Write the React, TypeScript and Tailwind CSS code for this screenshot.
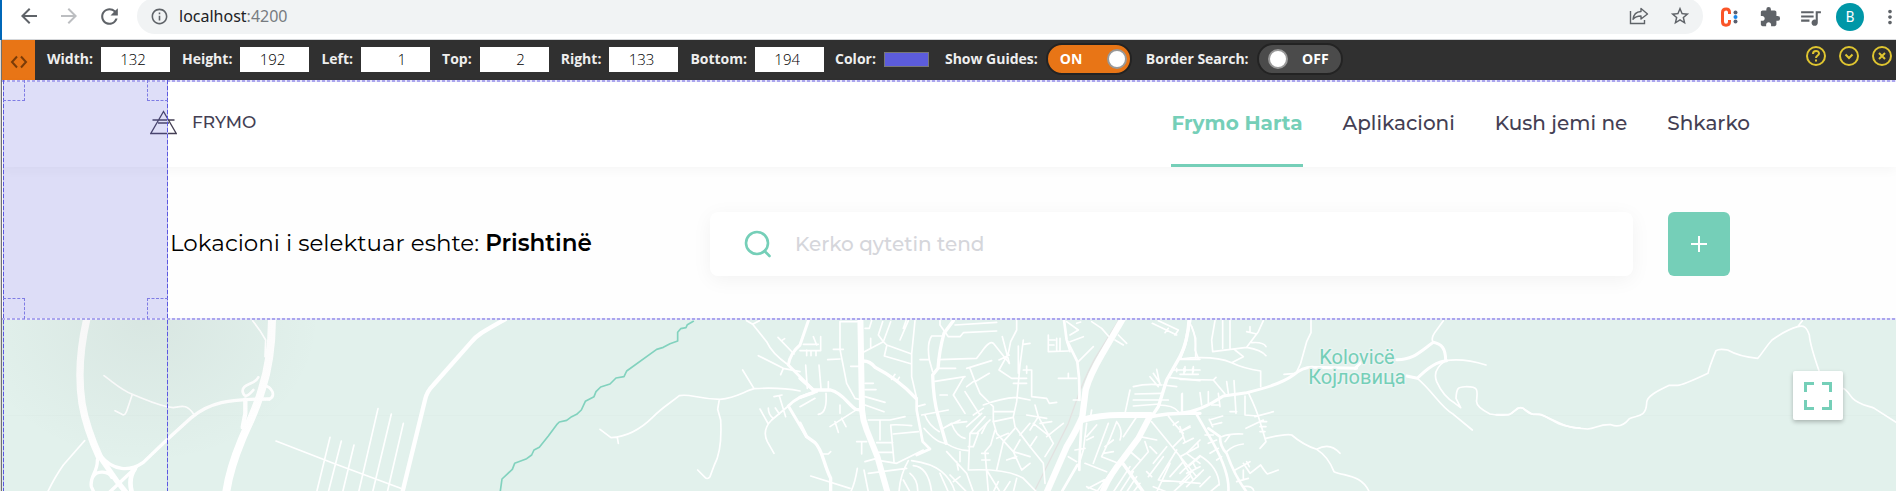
import type { ReactNode } from "react";
import {
  MdArrowBack,
  MdArrowForward,
  MdExtension,
  MdInfoOutline,
  MdMoreVert,
  MdQueueMusic,
  MdRefresh,
  MdStarOutline,
} from "react-icons/md";

function BrowserBar() {
  return (
    <div className="flex h-10 items-start overflow-hidden border-b border-[#d5d7da] bg-white pl-[15px] text-[#5f6368]">
      <div className="flex h-8 items-center gap-4">
        <button aria-label="Back"><MdArrowBack size={24} /></button>
        <button aria-label="Forward" className="text-[#bcbec1]"><MdArrowForward size={24} /></button>
        <button aria-label="Reload"><MdRefresh size={25} /></button>
      </div>
      <div className="ml-[15px] flex h-[34px] min-w-0 flex-1 items-end">
        <div className="flex h-9 w-full items-center rounded-full bg-[#f1f3f4] pr-3 pl-[13px]">
          <MdInfoOutline size={19} />
          <span className="ml-[10px] font-['Noto_Sans',sans-serif] text-base text-[#202124]">
            localhost<span className="text-[#777b80]">:4200</span>
          </span>
          <button aria-label="Share" className="ml-auto">
            <svg width="20" height="20" viewBox="0 0 20 20" fill="none" stroke="currentColor" strokeWidth="1.4">
              <path d="M1.5 5v12.5h14V14" />
              <path d="M12 2.5 18.5 8 12 13v-3c-3.500 0-6 .8-8 3.300C4.500 9 7.500 5.800 12 5.500z" strokeLinejoin="round" />
            </svg>
          </button>
          <button aria-label="Bookmark" className="ml-5"><MdStarOutline size={22} /></button>
        </div>
      </div>
      <div className="flex h-[34px] items-center pl-4">
        <button aria-label="Clockify">
          <svg width="20" height="20" viewBox="0 0 20 20">
            <path d="M10.500 7V5.200C10.500 3 9 2 7.200 2S3.500 3 3.500 5.500v9C3.500 17 5 18.200 7 18.200s3.500-1.200 3.500-3.400V13" fill="none" stroke="#fa5528" strokeWidth="3" />
            <circle cx="16.500" cy="5.500" r="2" fill="#5a6070" />
            <circle cx="16.500" cy="10" r="2" fill="#1a86e8" />
            <circle cx="16.500" cy="14.500" r="2" fill="#5a6070" />
          </svg>
        </button>
        <button aria-label="Extensions" className="ml-5"><MdExtension size={22} /></button>
        <button aria-label="Media" className="ml-[17px]"><MdQueueMusic size={25} /></button>
        <button aria-label="Profile" className="ml-[13px] h-7 w-7 rounded-full bg-[#0097a7] font-[Roboto,sans-serif] text-sm text-white">B</button>
        <button aria-label="Menu" className="-mr-[5px] ml-[15px]"><MdMoreVert size={22} /></button>
      </div>
    </div>
  );
}

function NumberField({ label, value }: { label: string; value: string }) {
  return (
    <label className="flex items-center gap-2">
      {label}
      <input
        type="text"
        defaultValue={value}
        className="h-[25px] w-[69px] bg-white pr-6 text-right text-[15px] font-light text-black outline-none"
      />
    </label>
  );
}

function Toggle({ label, on }: { label: string; on: boolean }) {
  return (
    <div className="flex items-center gap-2">
      <span>{label}</span>
      <button
        role="switch"
        aria-checked={on}
        aria-label={label}
        className={
          on
            ? "flex h-8 w-[86px] items-center justify-between rounded-full border-2 border-[#232323] bg-[#e87516] pr-[3px] pl-3 text-white"
            : "flex h-8 w-[86px] flex-row-reverse items-center justify-between rounded-full border-2 border-[#232323] bg-[#4b4b4b] pr-3 pl-[9px] text-white"
        }
      >
        <span>{on ? "ON" : "OFF"}</span>
        <span className="h-5 w-5 rounded-full border-2 border-[#999] bg-white" />
      </button>
    </div>
  );
}

function ToolIcon({ label, children }: { label: string; children: ReactNode }) {
  return (
    <button aria-label={label}>
      <svg width="22" height="22" viewBox="0 0 22 22" fill="none" stroke="#dfc530" strokeWidth="2">
        <circle cx="11" cy="11" r="9" />
        {children}
      </svg>
    </button>
  );
}

function RulerBar() {
  return (
    <div className="flex h-10 items-center bg-[#303030] pr-[3px] font-['Open_Sans',sans-serif] text-sm font-bold whitespace-nowrap text-[#eee]">
      <button aria-label="Drag" className="flex h-10 w-[33px] items-center justify-center bg-[#e87516] pt-1">
        <svg width="18" height="14" viewBox="0 0 18 14" fill="none" stroke="#7a3b08" strokeWidth="2">
          <path d="M7 1.500 2 7l5 5.500M11 1.500 16 7l-5 5.500" />
        </svg>
      </button>
      <div className="ml-3 flex items-center gap-4 pb-[2px]">
        <div className="flex items-center gap-3">
          <NumberField label="Width:" value="132" />
          <NumberField label="Height:" value="192" />
          <NumberField label="Left:" value="1" />
          <NumberField label="Top:" value="2" />
          <NumberField label="Right:" value="133" />
          <NumberField label="Bottom:" value="194" />
          <div className="-ml-px flex items-center gap-2">
            <span>Color:</span>
            <button aria-label="Color" className="h-[15px] w-[45px] border border-[#777] bg-[#5c5cdc]" />
          </div>
        </div>
        <div className="flex items-center gap-[14px]">
          <Toggle label="Show Guides:" on />
          <Toggle label="Border Search:" on={false} />
        </div>
      </div>
      <div className="ml-auto flex gap-[11px] pb-2">
        <ToolIcon label="Help">
          <path d="M8 9c0-4 6-4 6-.5 0 2-3 2-3 4.500M11 14.500v2" />
        </ToolIcon>
        <ToolIcon label="Collapse"><path d="m7.500 9.500 3.500 3.500 3.500-3.500" /></ToolIcon>
        <ToolIcon label="Close"><path d="m8 8 6 6M14 8l-6 6" /></ToolIcon>
      </div>
    </div>
  );
}

const links = ["Aplikacioni", "Kush jemi ne", "Shkarko"];

function SiteHeader() {
  return (
    <header className="relative flex h-[87px] items-center bg-white pr-[146px] pl-[148px] font-medium text-[#443f54] shadow-[0_4px_10px_rgba(0,0,0,0.03)]">
      <a href="#home" className="flex items-center gap-[15px] pb-[2px] text-[17px]">
        <svg width="27" height="25" viewBox="0 0 27 25" fill="none" stroke="currentColor" strokeWidth="1.300">
          <path d="M13.500 1.500.8 23.500h25.400zM2.500 10h22M8 13h11" />
        </svg>
        FRYMO
      </a>
      <nav className="ml-auto flex h-full items-center gap-10 text-xl">
        <a href="#harta" className="flex h-full items-center border-b-3 border-[#75cfb8] pt-px font-bold text-[#75cfb8]">
          Frymo Harta
        </a>
        {links.map((l) => (
          <a key={l} href={"#" + l} className="pb-[2px]">{l}</a>
        ))}
      </nav>
    </header>
  );
}

function SearchRow() {
  return (
    <section className="flex h-[153px] items-center bg-[#fefefe] pr-[166px] pl-[168px]">
      <p className="w-[540px] shrink-0 text-[23px] text-black">
        Lokacioni i selektuar eshte: <b className="font-semibold">Prishtinë</b>
      </p>
      <label className="flex h-16 min-w-0 flex-1 items-center gap-[23px] rounded-lg bg-white pl-[34px] shadow-[0_4px_20px_rgba(0,0,0,0.05)]">
        <svg width="28" height="28" viewBox="0 0 28 28" fill="none" stroke="#75cfb8" strokeWidth="2.600" strokeLinecap="round">
          <circle cx="13" cy="13" r="11" />
          <path d="m20.500 21 5 5" />
        </svg>
        <input
          aria-label="Kerko qytetin tend"
          placeholder="Kerko qytetin tend"
          className="min-w-0 flex-1 text-xl font-medium outline-none placeholder:text-[#d5d6db]"
        />
      </label>
      <button aria-label="Shto" className="ml-[35px] flex h-16 w-[62px] items-center justify-center rounded-md bg-[#75cfb8]">
        <svg width="18" height="18" viewBox="0 0 18 18" stroke="#fff" strokeWidth="2">
          <path d="M9 1v16M1 9h16" />
        </svg>
      </button>
    </section>
  );
}

function CityMap() {
  return (
    <section className="relative min-h-[171px] flex-1 overflow-hidden bg-[#e2f1ec]">
      <svg className="absolute inset-0 h-full w-full" viewBox="2 320 1894 171" preserveAspectRatio="xMinYMin slice" fill="none" stroke="#fff" strokeLinecap="round" strokeLinejoin="round">
        <path d="M2 415.500H1896" stroke="#dfeee9" strokeWidth="1" />

        <g transform="translate(0 290) scale(.33333)">
          <g strokeWidth="5">
            <path d="M312 257C350 285 365 300 397 313C440 330 480 350 520 353C545 349 560 340 583 375M397 313L383 355Q376 380 366 373L345 362M254 452L190 525Q165 560 143 606" />
            <path d="M758 92L780 122L797 150L795 200M828 453L1000 520L1202 595M990 442L950 606M1024 453L985 606M1062 465L1028 606M1134 356L1076 606M1174 372L1118 606M1210 400L1162 606" />
          </g>
          <path strokeWidth="22" strokeLinecap="butt" d="M262 80C238 180 234 260 246 340C256 400 275 450 300 505" />
          <path strokeWidth="16" d="M296 495L352 575L380 610" />
          <path strokeWidth="10" d="M300 495C340 545 390 545 430 517L500 450L575 382C630 338 680 327 808 327M292 510C294 545 268 560 274 590L284 612M278 562C290 538 328 545 335 562M410 530L325 610" />
          <path strokeWidth="14" d="M404 537C388 560 390 590 397 612" />
          <path strokeWidth="24" strokeLinecap="butt" d="M816 80C816 160 808 230 785 300C765 370 745 400 725 450C700 510 685 560 678 612" />
          <path strokeWidth="13" d="M736 328V370L728 412" />
          <path strokeWidth="8" d="M775 262C765 285 725 280 728 305C732 322 742 322 760 300M790 286C818 290 828 318 808 328" />
        </g>

        <g transform="translate(400 290) scale(.33333)">
          <path strokeWidth="13" d="M315 88C250 125 230 135 215 155L100 285Q80 305 75 330L6 612" />
          <path strokeWidth="5" d="M600 418L633 443Q700 440 760 380C790 350 810 340 838 317C870 310 890 327 960 328C1010 323 1030 305 1062 296C1110 293 1150 293 1200 303M1028 240L1062 296M652 443L655 460M958 328L953 358L962 390Q967 480 943 525L930 560Q922 570 915 562L893 540M1040 92L1058 103L1100 155Q1115 190 1165 225M1058 103L1078 92M1134 142L1182 192M1145 152L1154 146M1075 197L1150 235L1200 245M1150 235L1142 254M1122 320L1146 315M1138 318L1157 380M1165 348L1115 390Q1085 420 1102 455L1122 490M1080 357L1105 402M1105 354Q1105 375 1120 385M1126 354L1138 372" />
          <path strokeWidth="9" d="M1225 92L1200 165Q1170 190 1165 225L1240 300M1165 348Q1190 320 1250 305M1165 348L1220 440" />
          <path stroke="#82d2be" strokeWidth="5" d="M880 94L862 104L858 113L842 116L833 127V153L810 161L790 172L770 178L680 243L672 260L648 264L630 282L602 291L588 305L582 320L556 334L544 360L530 373L515 380L500 391L478 396L470 404L445 438L418 472L402 480L395 495L380 506L344 520L337 538L306 567L300 610" />
        </g>

        <g transform="translate(800 290) scale(.33333)">
          <path stroke="#e3e2e1" strokeWidth="4" d="M958 88L885 205Q850 270 830 330L805 400Q750 510 702 606" />
          <path strokeWidth="18" strokeLinecap="butt" d="M181 80L186 360Q188 390 200 420L232 500L264 612" />
          <path strokeWidth="19" strokeLinecap="butt" d="M972 80L905 195Q870 255 857 300L847 380Q830 420 800 470L738 612" />
          <path strokeWidth="18" d="M845 390Q900 375 960 375L1052 375L1015 445L970 505Q925 560 905 612" />
          <path strokeWidth="10" d="M0 265L40 300H92C130 310 145 345 168 358L186 360M188 213Q210 212 225 232C270 255 315 290 348 325M0 400L20 440L45 458C68 480 70 520 92 565V606M0 322L40 308M460 92L432 130Q418 180 414 235L398 255Q400 330 415 380L438 460M1167 88Q1165 150 1140 200L1100 270L1075 350L1055 380Q1100 368 1200 370M965 515L1030 606" />
          <path strokeWidth="8" d="M350 325V360L368 455L390 477L350 495M792 90L800 150L832 215Q840 270 838 330M845 395Q838 500 838 540M832 525L785 606" />
          <g strokeWidth="5">
            <path d="M120 95H172M120 95V178L140 280L165 325L186 330M100 178H130M83 209L120 207M152 229H180M0 182H60M10 163H55M62 140V182M40 140L50 165M20 180V197M33 182V197M48 182V197M17 225L22 295M57 225L63 295M85 275V300M78 310Q82 370 55 373M0 350L45 325M165 362L90 410M120 370V345M105 395L115 427M125 385L138 410M92 485L85 492H70M32 558L150 595M172 535Q165 580 152 606M192 540L205 606" />
            <path d="M195 115H208L215 92M248 95L235 135L250 155L190 187M212 145V175M272 95L250 155M325 92L300 150M318 92L310 115M250 155L260 165L335 192L345 92M260 168L253 198L335 222M335 192V260L350 325M275 268L285 253M290 275L298 262M195 280H220M195 299H228M195 320L255 337M195 345L252 365M205 390H270L315 380M240 393V450M272 405Q290 403 335 407M272 405L282 515M280 432L355 425M230 458H278M235 487H280M170 455H200M185 455V492M195 515L230 505M205 550L320 535M240 512L290 520L370 480M325 512Q300 555 297 606M335 512Q395 520 425 545T465 606M340 527Q385 530 395 606M330 550Q355 570 353 606M420 550L445 606M310 570L330 606" />
            <path d="M420 92V105L445 140H480L490 128L590 123M465 105L590 97M430 138H395Q380 160 388 210L398 245M360 209H388M415 209L530 205L545 185Q570 150 580 160L628 220M414 235H467M405 274L495 260M420 315H442M365 375L445 360M350 350L375 343M375 375Q385 405 418 425M372 415Q410 460 438 460M438 410L480 390M438 460Q470 480 505 482M455 402Q470 440 495 445M430 415L455 400L500 395" />
            <path d="M650 92V120L632 155L625 190L597 240L635 265H680M607 140L615 170L628 220M670 150L660 225L650 335L640 380M670 163L690 160M655 168V250M597 210L628 195M670 240H695M680 228V250M695 240V320L740 325L748 340L770 337M640 280H680M500 235L575 212M510 235L525 275L540 310L580 350V395M525 275L568 250M492 260L460 315L495 370M500 290L520 275M495 305L540 375M550 345Q600 325 650 322L690 330M580 365H640M580 395L640 382L645 410L690 470L730 520L735 580M520 375L550 355M500 410L545 370M510 430L555 380M530 430L570 390M510 430L505 540Q620 535 670 565L710 606M510 430H535M535 430L520 470H505" />
            <path d="M580 395L590 430L640 485L665 540M585 420L572 465L555 485L565 606M545 490H565M545 510H570M610 455L645 415M610 455L590 540M640 485L660 450M620 510L650 500M625 430L590 445M660 435L690 400M640 485L690 500M665 540L690 520M690 470L710 440M705 345L715 380L690 420M680 375L740 385M715 380L760 460M720 400L755 395M740 440L790 400M760 460L735 500M700 400L750 440M560 540L600 606M440 485L500 550L520 606M470 515L475 540M450 555L500 606M460 575L480 560M480 485V515M560 400L545 430M595 575L580 606M630 575L610 606M650 565L640 606" />
            <path d="M800 95L835 120L810 135M810 155L850 140M830 100L842 96M745 135V185L805 183M745 150H765M745 165H762M770 145V180M780 145V180M800 155L810 185M835 215L880 170M775 265H830M805 250V265M820 330H840M875 95L905 115L925 138M955 135L980 160M945 150L970 165M1057 100L1130 135M1075 92L1135 120L1125 135M1105 115L1095 128M1167 95Q1190 130 1185 180L1195 205M1140 208H1200M1115 240H1200M1105 262L1200 272M1130 235V245M1155 230V245M1180 230V245M1050 260L1075 290M1060 250L1080 280M1070 238L1080 285M1000 290Q1040 280 1085 285M1090 285L1130 290M1005 312L1085 310M1000 330H1105M1000 348L1080 342M990 300L975 370M1147 310V365M1075 345Q1120 345 1135 365M875 360L870 390M860 400L850 480L838 520M890 405L860 440M860 450L880 440M855 475L825 480M950 395Q930 450 905 500M925 400L880 520M950 395Q970 420 960 450M1010 380L970 440M905 500L955 520M855 520L920 545M940 450L915 470M940 485L910 490M830 515L805 500" />
            <path d="M1055 395L1190 560L1200 550M1105 378Q1120 400 1150 430M1120 405L1135 395M1140 425L1170 408M1150 440L1120 470M1070 490L1050 470M1035 455L1045 485L990 550M1020 440L1070 450M1160 490L1200 450M1130 480L1075 570M1150 515L1110 560M1175 545L1140 580M1200 500L1165 530M1090 500L1045 560M1110 520L1070 606M1170 560L1120 606M1075 570L1200 580M990 530L940 606M1000 545L960 606M1010 560L980 606M1020 580L1000 606M945 530L890 606M930 560L865 595M1100 470L1060 520M985 480L1020 510M860 590L900 606M1040 545L1055 560M1060 590L1100 606" />
          </g>
        </g>

        <g transform="translate(1180 290) scale(.33333)">
          <path strokeWidth="9" d="M30 92L15 165L0 205M0 370Q60 365 130 318L200 308Q300 285 340 255Q370 230 400 232L530 235M650 209C700 210 720 185 760 157C785 162 797 175 797 212M680 258L712 265Q760 215 800 212M525 235L545 215" />
          <path strokeWidth="5" d="M393 92V128L380 155L362 220L348 250L312 253M790 92L770 120Q750 145 760 157M797 212C840 205 880 213 918 225M797 212C770 230 760 250 770 275Q790 320 825 340L842 353M712 265C760 305 780 350 820 373L877 420M842 353L828 325C830 290 835 292 860 290C895 290 893 300 890 330Q885 350 930 372Q980 380 995 370L1012 355Q1025 350 1037 360L1055 372L1085 374L1140 400Q1170 415 1200 414" />
          <path strokeWidth="5" d="M205 308Q230 360 240 395L258 455L240 475M225 380L280 365M198 415L250 390M240 395H260M240 410H258M240 425H255M258 445Q320 430 335 435Q370 465 410 478Q445 500 462 545C500 560 545 555 568 606M410 478Q450 455 480 490" />
          <path strokeWidth="5" d="M105 92L95 150L98 185L200 172L235 125L250 92M128 92V175M150 92V175M200 125L230 132M210 110V125M200 172Q245 180 258 197M215 158Q250 155 258 170M165 180L190 200L155 218Q190 235 242 243V290M0 207Q100 195 155 218M35 110L47 145V205M0 253L55 253M12 235V253M38 235V253M0 268L100 270L135 312M100 270L108 262M5 312V362M60 308L65 345M85 305V340M115 310L120 350M95 345H115M140 275L145 310M162 272L168 370M150 365H170M195 318V375L232 378" />
          <path strokeWidth="8" d="M45 365L100 460Q150 550 145 606M85 415L120 440Q120 470 140 490Q165 560 200 606" />
          <path strokeWidth="5" d="M88 390L128 378M95 405L125 398M88 388L98 410M75 435H100M85 460L110 450M90 490L115 475M125 440Q150 430 188 432M140 485Q160 465 190 462M135 455L150 435M110 510L125 500M165 540L210 515M190 520L210 550L242 525Q255 545 262 552L295 540M200 515L208 530M170 575L205 565M190 540V570M190 590Q220 585 222 606M0 410L15 455M0 425L30 412M10 460L40 445M0 500L55 470L53 458M20 490L60 520M60 497Q20 530 0 550M60 497Q115 530 118 585M0 500L40 570M20 550L60 530M20 590L70 540M60 590L90 560M90 606L115 585M40 520L48 535" />
        </g>

        <g transform="translate(1496 290) scale(.33333)">
          <path strokeWidth="5" d="M252 414Q230 414 195 403M0 374H40Q55 363 68 354Q80 350 88 361Q100 372 112 373H130Q140 374 190 402Q220 413 275 417C300 415 310 402 345 404C365 412 385 405 400 386C420 375 450 385 452 340C450 320 480 305 520 286H545Q560 286 636 250Q640 230 660 182Q670 175 695 180Q730 200 785 205C800 190 805 175 828 150Q870 120 905 110L919 92M905 110C925 105 932 112 940 135Q942 165 970 245M1040 295C1055 300 1060 315 1070 325C1090 345 1120 348 1135 355L1202 398" />
        </g>

        <text fill="#75cfb8" stroke="#e9f4f1" strokeWidth="3" paintOrder="stroke" textAnchor="middle" fontFamily="Roboto, sans-serif" fontSize="20">
          <tspan x="1357" y="364">Kolovicë</tspan>
          <tspan x="1357" y="384">Којловица</tspan>
        </text>
      </svg>
      <div className="absolute top-0 left-0 h-36 w-80 bg-[radial-gradient(ellipse_at_45%_0%,rgba(90,90,90,0.07),transparent_70%)]" />
      <button aria-label="Fullscreen" className="absolute top-[51px] right-[53px] flex h-[49px] w-[50px] items-center justify-center rounded-xs bg-white shadow-[0_2px_4px_rgba(0,0,0,0.25)]">
        <svg width="28" height="28" viewBox="0 0 28 28" fill="none" stroke="#75cfb8" strokeWidth="3">
          <path d="M10 1.500H1.500V10M18 1.500h8.500V10M1.500 18v8.500H10M26.500 18v8.500H18" />
        </svg>
      </button>
    </section>
  );
}

const dashH = "bg-[repeating-linear-gradient(90deg,#aaa5ee_0_3px,#e9e8fb_3px_5px)]";
const dashV = "bg-[repeating-linear-gradient(180deg,#5b58e0_0_4px,#b9b7f0_4px_6px)]";

function SelectionOverlay() {
  return (
    <div className="pointer-events-none absolute inset-0">
      <div className="absolute top-0 left-px h-60 w-[165px] bg-[#5c5cdc]/20" />
      <div className={"absolute top-0 left-0 h-[2px] w-full " + dashH} />
      <div className={"absolute top-[238px] left-0 h-[2px] w-full " + dashH} />
      <div className={"absolute top-0 left-[1px] h-full w-px " + dashV} />
      <div className={"absolute top-0 left-[165px] h-full w-px " + dashV} />
      <div className="absolute top-0 left-px h-[21px] w-[22px] border-r border-b border-dashed border-[#7f7ce4]" />
      <div className="absolute top-0 left-[145px] h-[21px] w-[21px] border-b border-l border-dashed border-[#7f7ce4]" />
      <div className="absolute top-[218px] left-px h-[21px] w-[22px] border-t border-r border-dashed border-[#7f7ce4]" />
      <div className="absolute top-[218px] left-[145px] h-[21px] w-[21px] border-t border-l border-dashed border-[#7f7ce4]" />
    </div>
  );
}

export default function App() {
  return (
    <div className="flex min-h-screen bg-white">
      <div className="flex w-[2px] shrink-0 flex-col">
        <div className="h-10 bg-[#0067b8]" />
        <div className="flex-1 border-r border-[#707070] bg-[#ddd]" />
      </div>
      <div className="flex min-w-0 flex-1 flex-col">
        <BrowserBar />
        <RulerBar />
        <main className="relative flex flex-1 flex-col font-[Montserrat,Inter,sans-serif]">
          <SiteHeader />
          <SearchRow />
          <CityMap />
          <SelectionOverlay />
        </main>
      </div>
    </div>
  );
}
